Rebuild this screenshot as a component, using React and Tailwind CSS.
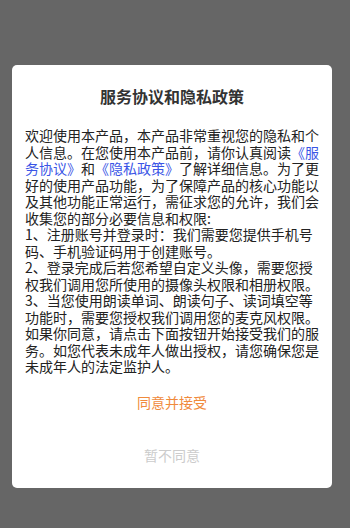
export default function App() {
  const font = { fontFamily: '"Noto Sans CJK SC", "Noto Sans", sans-serif' };
  return (
    <div className="w-[350px] h-[528px] bg-[#666666] pt-[65px] px-[12px]" style={font}>
      <div className="w-[320px] bg-white rounded-[5px] flex flex-col">
        <div className="pt-[20px] text-center font-bold text-[16px] leading-[22px] text-[#333333]">
          服务协议和隐私政策
        </div>
        <div className="mt-[20px] px-[13px] text-[14px] leading-[16.5px] text-[#222222]">
          <p>
            欢迎使用本产品，本产品非常重视您的隐私和个人信息。在您使用本产品前，请你认真阅读
            <span className="text-[#3a55e6]">《服务协议》</span>和
            <span className="text-[#3a55e6]">《隐私政策》</span>
            了解详细信息。为了更好的使用产品功能，为了保障产品的核心功能以及其他功能正常运行，需征求您的允许，我们会收集您的部分必要信息和权限:
          </p>
          <p>1、注册账号并登录时：我们需要您提供手机号码、手机验证码用于创建账号。</p>
          <p>2、登录完成后若您希望自定义头像，需要您授权我们调用您所使用的摄像头权限和相册权限。</p>
          <p>3、当您使用朗读单词、朗读句子、读词填空等功能时，需要您授权我们调用您的麦克风权限。</p>
          <p>如果你同意，请点击下面按钮开始接受我们的服务。如您代表未成年人做出授权，请您确保您是未成年人的法定监护人。</p>
        </div>
        <div className="mt-[8px] h-[40px] flex items-center justify-center text-[14px] text-[#f08a3c]">
          同意并接受
        </div>
        <div className="mt-[13px] h-[40px] flex items-center justify-center text-[14px] text-[#cccccc]">
          暂不同意
        </div>
        <div className="h-[12px]" />
      </div>
    </div>
  );
}
